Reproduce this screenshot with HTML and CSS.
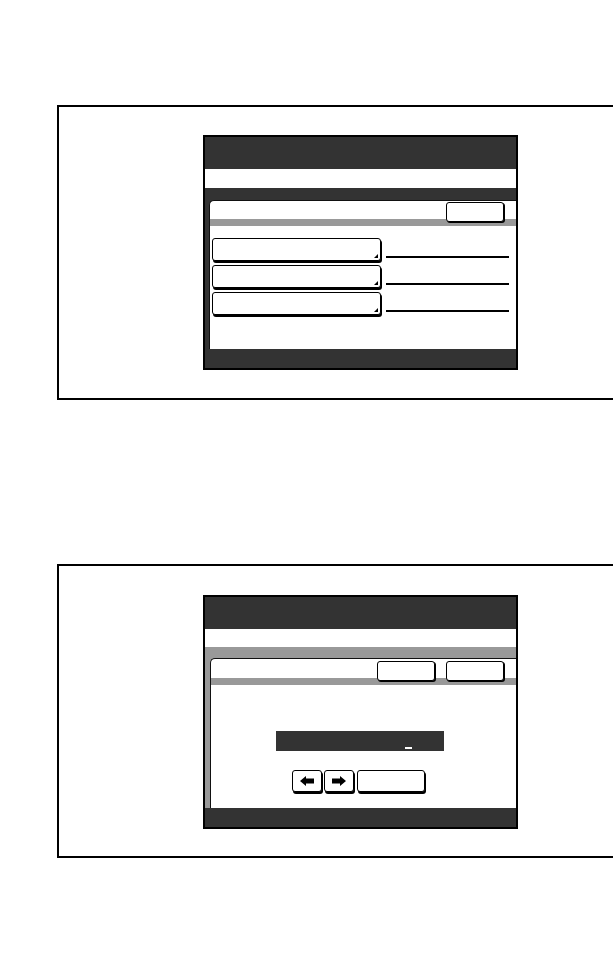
FILE: index.html
```html
<!DOCTYPE html>
<html lang="en">
<head>
    <meta charset="UTF-8">
    <meta name="viewport" content="width=device-width, initial-scale=1.0">
    <title>Panel screens</title>
    <link rel="stylesheet" href="styles.css">
</head>
<body>

    <div class="frame frame-top">
        <div class="screen">
            <div class="screen-header"></div>
            <div class="screen-band"></div>
            <div class="screen-strip"></div>
            <div class="panel">
                <div class="panel-head">
                    <button class="key key-small"></button>
                </div>
                <div class="option-list">
                    <div class="option-row">
                        <button class="key option"></button>
                        <div class="option-line"></div>
                    </div>
                    <div class="option-row">
                        <button class="key option"></button>
                        <div class="option-line"></div>
                    </div>
                    <div class="option-row">
                        <button class="key option"></button>
                        <div class="option-line"></div>
                    </div>
                </div>
            </div>
            <div class="screen-footer"></div>
        </div>
    </div>

    <div class="frame frame-bottom">
        <div class="screen screen-light">
            <div class="screen-header"></div>
            <div class="screen-band band-short"></div>
            <div class="screen-strip strip-gray"></div>
            <div class="panel panel-tall">
                <div class="panel-head head-tall">
                    <button class="key key-small"></button>
                    <button class="key key-small"></button>
                </div>
                <div class="entry">
                    <div class="entry-field"><span class="cursor"></span></div>
                    <div class="entry-keys">
                        <button class="key key-arrow">
                            <svg width="14" height="10" viewBox="0 0 14 10"><path d="M0 5 L6 0 L6 2.5 L14 2.5 L14 7.5 L6 7.5 L6 10 Z" fill="#000"/></svg>
                        </button>
                        <button class="key key-arrow">
                            <svg width="14" height="10" viewBox="0 0 14 10"><path d="M14 5 L8 0 L8 2.5 L0 2.5 L0 7.5 L8 7.5 L8 10 Z" fill="#000"/></svg>
                        </button>
                        <button class="key key-wide"></button>
                    </div>
                </div>
            </div>
            <div class="screen-footer"></div>
        </div>
    </div>

</body>
</html>
```

FILE: styles.css
```css
* {
    margin: 0;
    padding: 0;
    box-sizing: border-box;
    font-family: 'Liberation Sans', Arial, sans-serif;
}

body {
    background: #fff;
    overflow-x: hidden;
    padding-top: 105px;
}

.frame {
    margin-left: 57px;
    margin-right: -30px;
    border: 2px solid #000;
    padding-left: 144px;
}

.frame-top {
    height: 295px;
    padding-top: 28px;
}

.frame-bottom {
    height: 294px;
    margin-top: 164px;
    padding-top: 29px;
}

.screen {
    width: 315px;
    border: 2px solid #000;
    background-color: #333;
    display: flex;
    flex-direction: column;
}

.screen-light {
    background-color: #999;
}

.screen-header {
    height: 32px;
    background-color: #333;
}

.screen-band {
    height: 19px;
    background-color: #fff;
}

.band-short {
    height: 18px;
}

.screen-strip {
    height: 12px;
    background-color: #333;
}

.strip-gray {
    height: 11px;
    background-color: #999;
}

.screen-footer {
    height: 19px;
    background-color: #333;
}

.panel {
    height: 149px;
    margin-left: 4px;
    background-color: #fff;
    border-left: 1px solid #111;
    border-top: 1px solid #111;
    border-top-left-radius: 5px;
}

.panel-tall {
    height: 150px;
    margin-left: 5px;
}

.panel-head {
    height: 25px;
    border-bottom: 7px solid #999;
    display: flex;
    justify-content: flex-end;
    gap: 11px;
    padding-top: 1px;
    padding-right: 12px;
}

.head-tall {
    height: 26px;
    padding-top: 2px;
}

.key {
    display: flex;
    align-items: center;
    justify-content: center;
    background-color: #fff;
    border: 1px solid #000;
    border-radius: 3px;
    box-shadow: 1px 1px 0 #000;
}

.key-small {
    width: 58px;
    height: 20px;
    flex-shrink: 0;
}

.option-list {
    display: flex;
    flex-direction: column;
    gap: 4px;
    padding-top: 12px;
    padding-left: 2px;
}

.option-row {
    display: flex;
    align-items: flex-end;
}

.option {
    position: relative;
    width: 169px;
    height: 23px;
    box-shadow: 1px 2px 0 #000;
}

.option::after {
    content: "";
    position: absolute;
    right: 2px;
    bottom: 2px;
    border-left: 4px solid transparent;
    border-bottom: 4px solid #000;
}

.option-line {
    width: 123px;
    height: 2px;
    margin-left: 5px;
    margin-bottom: 3px;
    background-color: #000;
}

.entry {
    display: flex;
    flex-direction: column;
    padding-top: 46px;
    padding-left: 65px;
}

.entry-field {
    width: 168px;
    height: 20px;
    background-color: #333;
    padding-left: 129px;
    padding-top: 16px;
}

.cursor {
    display: block;
    width: 7px;
    height: 2px;
    background-color: #fff;
}

.entry-keys {
    display: flex;
    gap: 2px;
    margin-top: 19px;
    margin-left: 16px;
}

.key-arrow {
    width: 30px;
    height: 22px;
    box-shadow: 1px 2px 0 #000;
}

.key-wide {
    width: 68px;
    height: 22px;
    margin-left: 1px;
    box-shadow: 1px 2px 0 #000;
}
```
